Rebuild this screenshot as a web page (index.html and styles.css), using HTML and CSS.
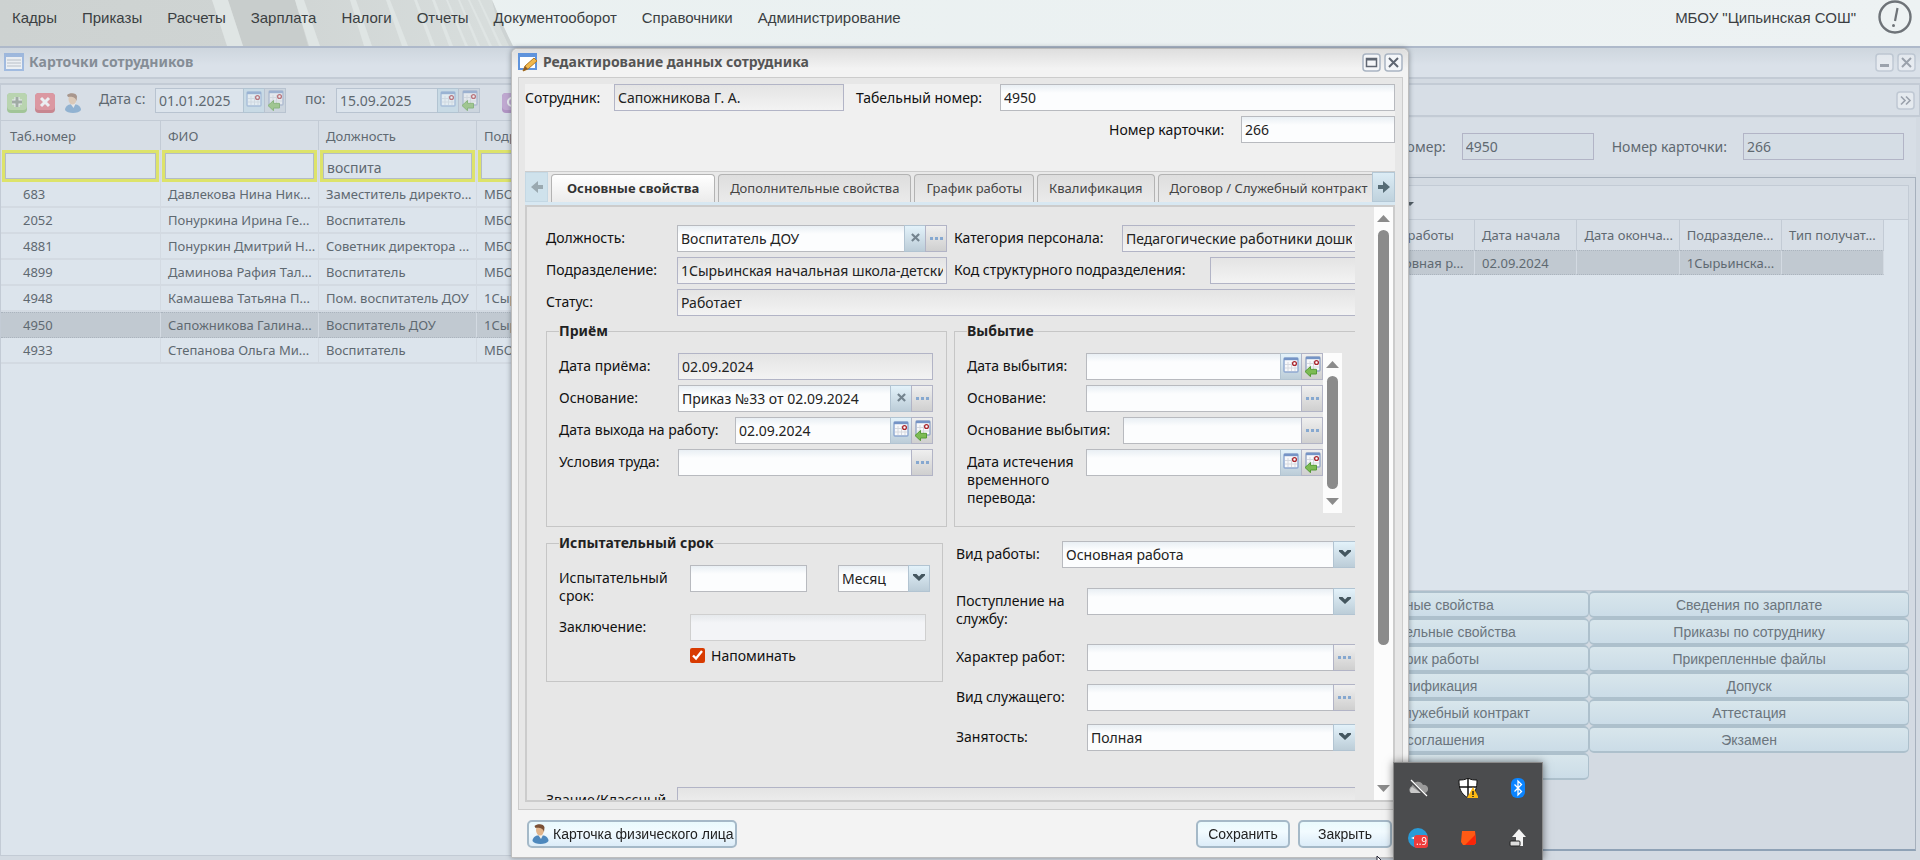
FILE: index.html
```html
<!doctype html>
<html lang="ru">
	<head>
		<meta charset="utf-8">
		<title>Карточки сотрудников</title>
		<link rel="stylesheet" href="styles.css">
	</head>

	<body>
		<!-- icons -->
		<svg class="sprite" aria-hidden="true">
			<symbol id="i-cal" viewBox="0 0 16 18">
				<rect x="1" y="1" width="14" height="14" rx="1" fill="#f8f9fb" stroke="#8ea8d0" stroke-width="1.4"/>
				<path d="M1 2h14" stroke="#7594c6" stroke-width="2.4"/>
				<path d="M2 7.5h12M2 11h12M5 5v9M8.5 5v9M12 5v9" stroke="#d6d9df" stroke-width="1"/>
				<circle cx="11.5" cy="6.5" r="1.9" fill="#fff" stroke="#a8242c" stroke-width="1.3"/>
			</symbol>
			<symbol id="i-calback" viewBox="0 0 17 21">
				<rect x="2" y="1" width="14" height="14" rx="1" fill="#f8f9fb" stroke="#98a8c6" stroke-width="1.4"/>
				<path d="M2 2h14" stroke="#7594c6" stroke-width="2.4"/>
				<path d="M3 7.5h12M3 11h12M6 5v9M9.5 5v9" stroke="#d6d9df" stroke-width="1"/>
				<circle cx="12.5" cy="6.5" r="1.9" fill="#fff" stroke="#a8242c" stroke-width="1.3"/>
				<path d="M1 15.5l5.500-5v2.800h6v4.700h-6v2.700z" fill="#7dbb54" stroke="#559a35" stroke-width="1"/>
			</symbol>
			<symbol id="i-x" viewBox="0 0 10 10">
				<path d="M1 1l8 8M9 1l-8 8" stroke="#74848f" stroke-width="2.4"/>
			</symbol>
			<symbol id="i-dots" viewBox="0 0 13 3">
				<path d="M0 0h3v3h-3zM5 0h3v3h-3zM10 0h3v3h-3z" fill="#86a8d0"/>
			</symbol>
			<symbol id="i-down" viewBox="0 0 12 7">
				<path d="M0 0h3.500l2.500 2.500L8.500 0H12v1.500L6 7 0 1.500z" fill="#44565f"/>
			</symbol>
			<symbol id="i-arrow" viewBox="0 0 12 12">
				<path d="M0 4h5V0l7 6-7 6V8H0z" fill="currentColor"/>
			</symbol>
			<symbol id="i-user" viewBox="0 0 16 20">
				<path d="M0 17c0-4 4-6 8-6s8 2 8 6c-2 4-14 4-16 0z" fill="#4d88bd"/>
				<path d="M5 10l3.500 5L11 10z" fill="#f3efe9"/>
				<ellipse cx="7.500" cy="6" rx="4" ry="5.500" fill="#e0b58c"/>
				<path d="M2 2c3-3 10-2 10 1.500L11.500 8C10.500 4 7 3.500 3 4z" fill="#7a5136"/>
			</symbol>
			<symbol id="i-close" viewBox="0 0 19 19">
				<rect x="1" y="1" width="17" height="17" rx="3" fill="#f4f6f9" stroke="#a9b4c2" stroke-width="1.5"/>
				<path d="M5 5l9 9M14 5l-9 9" stroke="#5f6672" stroke-width="2"/>
			</symbol>
			<symbol id="i-max" viewBox="0 0 19 19">
				<rect x="1" y="1" width="17" height="17" rx="3" fill="#f4f6f9" stroke="#a9b4c2" stroke-width="1.5"/>
				<path d="M4.500 5.500h10v8h-10z" fill="none" stroke="#5f6672" stroke-width="1.5"/>
				<path d="M4 6.500h11" stroke="#5f6672" stroke-width="2"/>
			</symbol>
			<symbol id="i-min" viewBox="0 0 19 19">
				<rect x="1" y="1" width="17" height="17" rx="3" fill="#f4f6f9" stroke="#a9b4c2" stroke-width="1.5"/>
				<path d="M5 12.500h9" stroke="#5f6672" stroke-width="3"/>
			</symbol>
			<symbol id="i-more" viewBox="0 0 19 19">
				<rect x="1" y="1" width="17" height="17" rx="3" fill="#f4f6f9" stroke="#a9b4c2" stroke-width="1.5"/>
				<path d="M5 5.500l4 4-4 4M10 5.500l4 4-4 4" fill="none" stroke="#5f6672" stroke-width="1.6"/>
			</symbol>
		</svg>

		<header class="topbar">
			<svg class="topbar-bg" viewBox="0 0 560 46" aria-hidden="true">
				<defs>
					<linearGradient id="tb" x1="0" x2="1"><stop offset="0" stop-color="#cdd2d1"/><stop offset=".5" stop-color="#cfd4d3"/><stop offset="1" stop-color="#d8dedd"/></linearGradient>
				</defs>
				<path d="M0 0H492L512 46H0z" fill="url(#tb)"/>
				<path d="M228 0H295L308 46H243z" fill="#c8cdcc"/>
				<g fill="#dfe5e4">
					<path d="M212 0h16l15 46h-16z"/>
					<path d="M295 0h9l16 46h-11z"/>
					<path d="M350 0h6l16 46h-8z"/>
					<path d="M386 0h4l18 46h-6z"/>
					<path d="M414 0h3l18 46h-4z"/>
					<path d="M432 0h3l18 46h-4z"/>
					<path d="M446 0h2l20 46h-3z"/>
					<path d="M458 0h2l20 46h-3z"/>
					<path d="M468 0h2l22 46h-3z"/>
					<path d="M478 0h2l22 46h-3z"/>
				</g>
				<path d="M492 0c6 14 13 30 21 46h-4c-8-16-14-30-17-46z" fill="#cdd3d3"/>
			</svg>
			<nav class="menu">
				<a href="#">Кадры</a>
				<a href="#">Приказы</a>
				<a href="#">Расчеты</a>
				<a href="#">Зарплата</a>
				<a href="#">Налоги</a>
				<a href="#">Отчеты</a>
				<a href="#">Документооборот</a>
				<a href="#">Справочники</a>
				<a href="#">Администрирование</a>
			</nav>
			<a href="#" class="org">МБОУ "Ципьинская СОШ"</a>
			<svg class="alert" viewBox="0 0 34 34" role="img" aria-label="Внимание">
				<circle cx="17" cy="17" r="15.500" fill="none" stroke="#6e7378" stroke-width="2.4"/>
				<path d="M19.500 8l-2.500 13" stroke="#6e7378" stroke-width="2.2"/>
				<circle cx="15.500" cy="25.500" r="1.500" fill="#6e7378"/>
			</svg>
		</header>

		<main class="window">
			<div class="win-title">
				<svg class="faded" width="20" height="18" viewBox="0 0 20 18"><path d="M1 1h18v16H1z" fill="#fff" stroke="#6a96d8" stroke-width="2"/><path d="M1 2.500h18" stroke="#6a96d8" stroke-width="3"/><path d="M3 7h14M3 10h14M3 13h14" stroke="#9aa2aa"/></svg>
				<h1>Карточки сотрудников</h1>
				<button class="tool faded" aria-label="Свернуть"><svg><use href="#i-min"/></svg></button>
				<button class="tool faded" aria-label="Закрыть окно"><svg><use href="#i-close"/></svg></button>
			</div>
			<div class="win-body">
				<section class="cards">
					<div class="toolbar">
						<button class="sq faded" aria-label="Добавить"><svg viewBox="0 0 20 20"><rect width="20" height="20" rx="4" fill="#6fae4c"/><rect width="20" height="17" rx="4" fill="#9ccb7c"/><path d="M10 4v10M5 9h10" stroke="#fff" stroke-width="5"/><path d="M10 4v10M5 9h10" stroke="#6a7a66" stroke-width="3"/></svg></button>
						<button class="sq faded" aria-label="Удалить"><svg viewBox="0 0 20 20"><rect width="20" height="20" rx="4" fill="#b8303c"/><rect width="20" height="17" rx="4" fill="#df5560"/><path d="M6 5l8 8M14 5l-8 8" stroke="#fff" stroke-width="3"/></svg></button>
						<button class="sq faded" aria-label="Физическое лицо"><svg><use href="#i-user"/></svg></button>
						<label for="from" class="from">Дата с:</label>
						<div class="ctl date-from">
							<input id="from" value="01.01.2025"><button class="trig blue" aria-label="Календарь"><svg class="cal"><use href="#i-cal"/></svg></button><button class="trig" aria-label="Назад"><svg class="calback"><use href="#i-calback"/></svg></button>
						</div>
						<label for="to" class="to">по:</label>
						<div class="ctl date-to">
							<input id="to" value="15.09.2025"><button class="trig blue" aria-label="Календарь"><svg class="cal"><use href="#i-cal"/></svg></button><button class="trig" aria-label="Назад"><svg class="calback"><use href="#i-calback"/></svg></button>
						</div>
						<button class="sq faded" aria-label="Обновить"><svg viewBox="0 0 20 20"><rect width="20" height="20" rx="4" fill="#8a4aa0"/><rect width="20" height="17" rx="4" fill="#a874bb"/><circle cx="10" cy="9" r="4" fill="none" stroke="#fff" stroke-width="2"/></svg></button>
					</div>
					<table class="grid">
						<thead>
							<tr>
								<th>Таб.номер</th>
								<th>ФИО</th>
								<th>Должность</th>
								<th>Подразделение</th>
							</tr>
							<tr class="filters">
								<td><input aria-label="Таб.номер"></td>
								<td><input aria-label="ФИО"></td>
								<td><input aria-label="Должность" value="воспита"></td>
								<td><input aria-label="Подразделение"></td>
							</tr>
						</thead>
						<tbody>
							<tr><td>683</td><td>Давлекова Нина Ник...</td><td>Заместитель директо...</td><td>МБОУ</td></tr>
							<tr><td>2052</td><td>Понуркина Ирина Ге...</td><td>Воспитатель</td><td>МБОУ</td></tr>
							<tr><td>4881</td><td>Понуркин Дмитрий Н...</td><td>Советник директора ...</td><td>МБОУ</td></tr>
							<tr><td>4899</td><td>Даминова Рафия Тал...</td><td>Воспитатель</td><td>МБОУ</td></tr>
							<tr><td>4948</td><td>Камашева Татьяна П...</td><td>Пом. воспитатель ДОУ</td><td>1Сырьинская</td></tr>
							<tr class="selected"><td>4950</td><td>Сапожникова Галина...</td><td>Воспитатель ДОУ</td><td>1Сырьинская</td></tr>
							<tr><td>4933</td><td>Степанова Ольга Ми...</td><td>Воспитатель</td><td>МБОУ</td></tr>
						</tbody>
					</table>
				</section>

				<section class="details">
					<div class="details-head">
						<button class="tool faded" aria-label="Развернуть"><svg><use href="#i-more"/></svg></button>
					</div>
					<div class="details-fields">
						<label for="d-tab">Табельный номер:</label>
						<div class="ctl w-tab"><input id="d-tab" value="4950" readonly></div>
						<label for="d-card">Номер карточки:</label>
						<div class="ctl w-card"><input id="d-card" value="266" readonly></div>
					</div>
					<div class="works">
						<div class="works-grid">
							<div class="works-bar"><span class="caret"></span></div>
							<table class="grid">
								<thead>
									<tr><th></th><th>Вид работы</th><th>Дата начала</th><th>Дата оконча...</th><th>Подразделе...</th><th>Тип получат...</th></tr>
								</thead>
								<tbody>
									<tr class="selected"><td></td><td>Основная р...</td><td>02.09.2024</td><td></td><td>1Сырьинска...</td><td></td></tr>
								</tbody>
							</table>
						</div>
						<div class="links">
							<button>Основные свойства</button>
							<button>Сведения по зарплате</button>
							<button>Дополнительные свойства</button>
							<button>Приказы по сотруднику</button>
							<button>График работы</button>
							<button>Прикрепленные файлы</button>
							<button>Квалификация</button>
							<button>Допуск</button>
							<button>Договор / Служебный контракт</button>
							<button>Аттестация</button>
							<button>Доп. соглашения</button>
							<button>Экзамен</button>
							<button aria-label="Прочее"></button>
						</div>
					</div>
				</section>
			</div>
		</main>

		<div class="layer">
			<div class="dialog" role="dialog" aria-labelledby="dlg-title">
				<div class="dlg-title">
					<svg width="20" height="19" viewBox="0 0 20 19"><path d="M1 1h17v15H1z" fill="#fff" stroke="#5f93dc" stroke-width="2"/><path d="M1 2.500h17" stroke="#5f93dc" stroke-width="3"/><path d="M5 18l2-5 9-8 3 3-9 8z" fill="#f2b84b" stroke="#b27a24"/><path d="M5 18l2-5 3 3z" fill="#8a5a28"/></svg>
					<h2 id="dlg-title">Редактирование данных сотрудника</h2>
					<button class="tool" aria-label="Развернуть окно"><svg><use href="#i-max"/></svg></button>
					<button class="tool" aria-label="Закрыть диалог"><svg><use href="#i-close"/></svg></button>
				</div>

				<div class="dlg-body">
					<div class="person">
						<div class="person-row">
							<label class="l-89" for="p-name">Сотрудник:</label>
							<div class="ctl w-name"><input id="p-name" value="Сапожникова Г. А." readonly></div>
							<label class="l-144 after" for="p-tab">Табельный номер:</label>
							<div class="ctl"><input id="p-tab" value="4950"></div>
						</div>
						<div class="person-row right">
							<label class="l-132" for="p-card">Номер карточки:</label>
							<div class="ctl w-card"><input id="p-card" value="266"></div>
						</div>
					</div>

					<div class="tabs">
						<button class="scroll-tab off" aria-label="Предыдущие вкладки"><svg class="flip"><use href="#i-arrow"/></svg></button>
						<div class="tab-strip" role="tablist">
							<button class="tab active" role="tab">Основные свойства</button>
							<button class="tab" role="tab">Дополнительные свойства</button>
							<button class="tab" role="tab">График работы</button>
							<button class="tab" role="tab">Квалификация</button>
							<button class="tab" role="tab">Договор / Служебный контракт</button>
						</div>
						<button class="scroll-tab" aria-label="Следующие вкладки"><svg><use href="#i-arrow"/></svg></button>
					</div>

					<div class="tab-panel">
						<form class="form">
							<div class="cols top-rows">
								<div class="row">
									<label class="l-131" for="f-post">Должность:</label>
									<div class="ctl"><input id="f-post" value="Воспитатель ДОУ"><button type="button" class="trig blue" aria-label="Очистить"><svg class="x"><use href="#i-x"/></svg></button><button type="button" class="trig" aria-label="Выбрать"><svg class="dots"><use href="#i-dots"/></svg></button></div>
								</div>
								<div class="row">
									<label class="l-168" for="f-cat">Категория персонала:</label>
									<div class="ctl"><input id="f-cat" class="cut" value="Педагогические работники дошкольного образования" readonly></div>
								</div>
								<div class="row">
									<label class="l-131" for="f-dep">Подразделение:</label>
									<div class="ctl"><input id="f-dep" value="1Сырьинская начальная школа-детский сад" readonly></div>
								</div>
								<div class="row">
									<label class="l-256" for="f-code">Код структурного подразделения:</label>
									<div class="ctl"><input id="f-code" class="cut" readonly></div>
								</div>
								<div class="row wide">
									<label class="l-131" for="f-state">Статус:</label>
									<div class="ctl"><input id="f-state" class="cut" value="Работает" readonly></div>
								</div>
							</div>

							<div class="cols">
								<fieldset class="box">
									<legend>Приём</legend>
									<div class="row">
										<label class="l-119" for="f-in">Дата приёма:</label>
										<div class="ctl"><input id="f-in" value="02.09.2024" readonly></div>
									</div>
									<div class="row">
										<label class="l-119" for="f-base">Основание:</label>
										<div class="ctl"><input id="f-base" value="Приказ №33 от 02.09.2024"><button type="button" class="trig blue" aria-label="Очистить"><svg class="x"><use href="#i-x"/></svg></button><button type="button" class="trig" aria-label="Выбрать"><svg class="dots"><use href="#i-dots"/></svg></button></div>
									</div>
									<div class="row">
										<label class="l-176" for="f-start">Дата выхода на работу:</label>
										<div class="ctl"><input id="f-start" value="02.09.2024"><button type="button" class="trig blue" aria-label="Календарь"><svg class="cal"><use href="#i-cal"/></svg></button><button type="button" class="trig" aria-label="Назад"><svg class="calback"><use href="#i-calback"/></svg></button></div>
									</div>
									<div class="row">
										<label class="l-119" for="f-cond">Условия труда:</label>
										<div class="ctl"><input id="f-cond"><button type="button" class="trig" aria-label="Выбрать"><svg class="dots"><use href="#i-dots"/></svg></button></div>
									</div>
								</fieldset>

								<fieldset class="box cut">
									<legend>Выбытие</legend>
									<div class="scroller">
										<div class="scroller-body">
											<div class="row">
												<label class="l-119" for="f-out">Дата выбытия:</label>
												<div class="ctl"><input id="f-out"><button type="button" class="trig blue" aria-label="Календарь"><svg class="cal"><use href="#i-cal"/></svg></button><button type="button" class="trig" aria-label="Назад"><svg class="calback"><use href="#i-calback"/></svg></button></div>
											</div>
											<div class="row">
												<label class="l-119" for="f-obase">Основание:</label>
												<div class="ctl"><input id="f-obase"><button type="button" class="trig" aria-label="Выбрать"><svg class="dots"><use href="#i-dots"/></svg></button></div>
											</div>
											<div class="row">
												<label class="l-156" for="f-oreason">Основание выбытия:</label>
												<div class="ctl"><input id="f-oreason"><button type="button" class="trig" aria-label="Выбрать"><svg class="dots"><use href="#i-dots"/></svg></button></div>
											</div>
											<div class="row">
												<label class="l-119" for="f-exp">Дата истечения временного перевода:</label>
												<div class="ctl"><input id="f-exp"><button type="button" class="trig blue" aria-label="Календарь"><svg class="cal"><use href="#i-cal"/></svg></button><button type="button" class="trig" aria-label="Назад"><svg class="calback"><use href="#i-calback"/></svg></button></div>
											</div>
										</div>
										<div class="bar"><i class="up"></i><i class="thumb"></i><i class="down"></i></div>
									</div>
								</fieldset>
							</div>

							<div class="cols second">
								<fieldset class="box trial">
									<legend>Испытательный срок</legend>
									<div class="row first">
										<label class="l-131" for="f-trial">Испытательный срок:</label>
										<div class="ctl w-trial"><input id="f-trial"></div>
										<div class="ctl combo w-unit"><select aria-label="Единица срока"><option>Месяц</option></select><span class="trig blue"><svg class="chev"><use href="#i-down"/></svg></span></div>
									</div>
									<div class="row">
										<label class="l-131" for="f-res">Заключение:</label>
										<div class="ctl"><input id="f-res" disabled></div>
									</div>
									<label class="check"><input type="checkbox" checked> Напоминать</label>
								</fieldset>

								<div class="kinds">
									<div class="row">
										<label class="l-106" for="f-kind">Вид работы:</label>
										<div class="ctl combo"><select id="f-kind" class="cut"><option>Основная работа</option></select><span class="trig blue cut"><svg class="chev"><use href="#i-down"/></svg></span></div>
									</div>
									<div class="row tall">
										<label class="l-131" for="f-serv">Поступление на службу:</label>
										<div class="ctl combo"><select id="f-serv" class="cut"><option></option></select><span class="trig blue cut"><svg class="chev"><use href="#i-down"/></svg></span></div>
									</div>
									<div class="row">
										<label class="l-131" for="f-char">Характер работ:</label>
										<div class="ctl"><input id="f-char"><button type="button" class="trig cut" aria-label="Выбрать"><svg class="dots"><use href="#i-dots"/></svg></button></div>
									</div>
									<div class="row">
										<label class="l-131" for="f-off">Вид служащего:</label>
										<div class="ctl"><input id="f-off"><button type="button" class="trig cut" aria-label="Выбрать"><svg class="dots"><use href="#i-dots"/></svg></button></div>
									</div>
									<div class="row">
										<label class="l-131" for="f-busy">Занятость:</label>
										<div class="ctl combo"><select id="f-busy" class="cut"><option>Полная</option></select><span class="trig blue cut"><svg class="chev"><use href="#i-down"/></svg></span></div>
									</div>
								</div>
							</div>

							<div class="row rank">
								<label class="l-131" for="f-rank">Звание/Классный чин:</label>
								<div class="ctl"><input id="f-rank" class="cut" readonly></div>
							</div>
						</form>
						<div class="bar main-bar"><i class="up"></i><i class="thumb"></i><i class="down"></i></div>
					</div>
				</div>

				<div class="dlg-foot">
					<button class="btn with-icon"><svg><use href="#i-user"/></svg>Карточка физического лица</button>
					<button class="btn">Сохранить</button>
					<button class="btn">Закрыть</button>
				</div>
			</div>
		</div>

		<div class="tray">
			<svg viewBox="0 0 20 20"><path d="M3 15a4 4 0 0 1 1-7 6 6 0 0 1 11-1 4 4 0 0 1 2 8z" fill="#9b9b9b"/><path d="M3 15a4 4 0 0 1 1-6l9 6z" fill="#c9c9c9"/><path d="M2 2l16 16" stroke="#4b4c4e" stroke-width="3"/><path d="M3 2l16 16" stroke="#fff" stroke-width="1.3"/></svg>
			<svg viewBox="0 0 20 20"><path d="M10 0c3 2 6 2 9 2 0 8-1 13-9 18C2 15 1 10 1 2c3 0 6 0 9-2z" fill="#fff" stroke="#111"/><path d="M10 0v19M1 9h17" stroke="#111" stroke-width="1.5"/><path d="M15 9l6 11H9z" fill="#fdb913"/><path d="M15 13v4M15 18v1" stroke="#222" stroke-width="1.5"/></svg>
			<svg viewBox="0 0 20 20"><rect x="3" width="14" height="20" rx="6" fill="#0a84ff"/><path d="M6.500 6.500l7 7L10 17V3l3.500 3.500-7 7" fill="none" stroke="#fff" stroke-width="1.3"/></svg>
			<svg viewBox="0 0 20 20"><circle cx="10" cy="10" r="10" fill="#2a9bd8"/><path d="M3 10l5-2v4z" fill="#fff"/><rect x="6" y="7" width="14" height="13" rx="3" fill="#f03c3c"/><text x="8" y="17" class="badge">..9</text></svg>
			<svg viewBox="0 0 20 20"><path d="M4 3h13l1 12-2 2H5l-2-3z" fill="#ff5a14"/><path d="M17 3l1 12-2 2H7L17 7z" fill="#fa2408"/></svg>
			<svg viewBox="0 0 20 20"><path d="M11 1l7 8h-3v9H8V9H4z" fill="#f4f4f4"/><rect x="2" y="13" width="10" height="5" rx="1" fill="#ddd" stroke="#222"/></svg>
		</div>
		<svg class="pointer" width="12" height="18" viewBox="0 0 12 18"><path d="M1 1v14l3-3 3 5 2-1-3-5h5z" fill="#fff" stroke="#223"/></svg>
	</body>
</html>
```
FILE: styles.css
```css
* {
	box-sizing: border-box;
}

html, body {
	height: 100%;
	margin: 0;
}

body {
	display: flex;
	flex-direction: column;
	overflow: hidden;
	background: #d3dae2;
	font-family: "Noto Sans", Tahoma, sans-serif;
	font-size: 14px;
	color: #111;
}

button, input, select {
	font: inherit;
	color: inherit;
	margin: 0;
}

button {
	padding: 0;
	border: 0;
	background: none;
	cursor: pointer;
}

h1, h2 {
	margin: 0;
	font-size: 14px;
	line-height: 18px;
}

.sprite {
	position: absolute;
	width: 0;
	height: 0;
}

.faded {
	opacity: 0.5;
}

/* top menu */
.topbar {
	position: relative;
	display: flex;
	align-items: center;
	flex: none;
	height: 48px;
	padding: 0 8px 12px 12px;
	background: linear-gradient(90deg, #e9f0f0, #edf2f3);
	border-bottom: 2px solid #aeb9ca;
	font-family: "Liberation Sans", Arial, sans-serif;
	font-size: 15px;
}

.topbar-bg {
	position: absolute;
	left: 0;
	top: 0;
	width: 560px;
	height: 46px;
}

.menu {
	position: relative;
	display: flex;
	gap: 25px;
	flex: 1;
}

.topbar a {
	color: #3b3f42;
	text-decoration: none;
	white-space: nowrap;
}

.alert {
	width: 34px;
	height: 34px;
	margin-left: 22px;
}

/* main window */
.window {
	display: flex;
	flex-direction: column;
	flex: 1;
	min-height: 0;
	color: #5f6971;
}

.win-title {
	display: flex;
	align-items: center;
	gap: 3px;
	flex: none;
	height: 31px;
	padding: 0 4px 1px;
	background: linear-gradient(#ced6de, #dae1e9 60%);
	border-bottom: 2px solid #c3cbd5;
}

.win-title h1 {
	flex: 1;
	margin-left: 2px;
	color: #858d96;
}

.tool {
	width: 19px;
	height: 19px;
}

.tool svg {
	display: block;
	width: 19px;
	height: 19px;
}

.win-body {
	display: flex;
	flex: 1;
	min-height: 0;
	padding: 4px 0 4px;
	gap: 6px;
}

.cards {
	flex: 1;
	min-width: 0;
	background: #dce4ec;
	border: 2px solid #c3cbd5;
	border-width: 2px 1px 1px;
}

.toolbar {
	display: flex;
	align-items: center;
	height: 36px;
	padding-left: 6px;
	gap: 8px;
	background: #d7dee6;
	border-bottom: 1px solid #c3cbd5;
}

.toolbar label {
	margin-top: -8px;
	white-space: nowrap;
}

.toolbar .from {
	width: 48px;
	margin-left: 8px;
}

.toolbar .to {
	width: 23px;
	margin-left: 11px;
}

.toolbar .ctl {
	flex: none;
	height: 25px;
	margin-top: -4px;
}

.toolbar .date-from {
	width: 131px;
}

.toolbar .date-to {
	width: 144px;
	margin-right: 14px;
}

.sq {
	width: 20px;
	height: 20px;
}

.sq svg {
	display: block;
	width: 20px;
	height: 20px;
}

.window .ctl input {
	background: #dce4ec;
	border-color: #b8c3d0;
	color: #5f6971;
}

.window .ctl input:read-only {
	background: #d5dde5;
}

.window .trig {
	border-color: #b8c3d0;
	background: #ccd5de;
}

.window .trig.blue {
	background: #c8dae5;
}

.window .trig svg {
	opacity: 0.55;
}

.grid {
	width: 100%;
	table-layout: fixed;
	border-collapse: separate;
	border-spacing: 0;
	font-size: 13px;
}

.grid th {
	height: 30px;
	padding: 0 7px;
	text-align: left;
	font-weight: normal;
	background: #d7dee6;
	border-right: 1px solid #c3cbd5;
	white-space: nowrap;
	overflow: hidden;
}

.grid td {
	height: 26px;
	padding: 0 7px;
	border-right: 1px solid #d3dae2;
	border-bottom: 2px solid #d3dae2;
	line-height: 18px;
	white-space: nowrap;
	overflow: hidden;
}

.grid .selected td {
	background: #c1c9d1;
	border-top: 1px dotted #abb4be;
	border-bottom: 1px dotted #abb4be;
}

.cards .grid th {
	height: 29px;
}

.cards .grid th:nth-child(1) {
	width: 160px;
	padding-left: 9px;
}

.cards .grid th:nth-child(2), .cards .grid th:nth-child(3) {
	width: 158px;
}

.cards .grid tbody td:first-child {
	padding-left: 22px;
}

.grid .filters td {
	height: 32px;
	padding: 0 1px;
	background: #d7dee6;
	border-bottom: 0;
}

.filters input {
	display: block;
	width: 100%;
	height: 32px;
	padding: 2px 4px 0;
	background: #dce4ec;
	border: 3px solid #dde36a;
	outline: 1px solid #b3bcc6;
	outline-offset: -4px;
	font-size: 14px;
}

.details {
	display: flex;
	flex-direction: column;
	flex: none;
	width: 34.3%;
	padding-bottom: 5px;
}

.details-head {
	display: flex;
	justify-content: flex-end;
	align-items: center;
	height: 34px;
	padding-right: 4px;
	background: #d7dee6;
	border: 2px solid #c3cbd5;
	border-right-width: 1px;
}

.details-fields {
	display: flex;
	justify-content: flex-end;
	align-items: center;
	height: 56px;
	margin: 1px 4px 3px 0;
	padding: 0 12px 0 0;
	gap: 16px;
	background: #d7dee6;
}

.details-fields .ctl {
	flex: none;
}

.w-tab {
	width: 132px;
	margin-right: 2px;
}

.details .w-card {
	width: 161px;
}

.works {
	display: flex;
	flex-direction: column;
	flex: 1;
	margin-right: 4px;
	padding: 7px 6px 0 7px;
	border: 1px solid #a6b0bc;
	border-bottom: 2px solid #8fa2b6;
}

.works-grid {
	flex: 1;
	background: #dce4ec;
	border: 1px solid #c3cbd5;
}

.works-bar {
	height: 34px;
	padding: 16px 0 0 136px;
	background: #d7dee6;
	border-bottom: 1px solid #c3cbd5;
}

.caret {
	display: block;
	width: 7px;
	border: 4px solid transparent;
	border-top-color: #4e5961;
}

.works .grid {
	width: 614px;
}

.works .grid td {
	height: 25px;
}

.links {
	display: grid;
	grid-template-columns: 1fr 1fr;
	grid-auto-rows: 27px;
	margin-bottom: 69px;
}

.links button {
	background: linear-gradient(#d8e6ec, #cbdce7);
	border: 2px solid #adc0cc;
	border-left-width: 1px;
	border-right-width: 1px;
	border-radius: 5px;
	font-family: "Liberation Sans", Arial, sans-serif;
	font-size: 14px;
	color: #6b757d;
}

/* dialog */
.layer {
	position: fixed;
	inset: 48px 0 2px;
	display: flex;
	justify-content: center;
}

.dialog {
	display: flex;
	flex-direction: column;
	width: 46%;
	min-width: 898px;
	padding: 0 5px 0 6px;
	background: #f3f3f3;
	border: 1px solid #bdbdbd;
	border-radius: 6px 6px 0 0;
	box-shadow: 0 0 5px rgba(80, 90, 100, 0.6);
}

.dlg-title {
	display: flex;
	align-items: center;
	gap: 3px;
	flex: none;
	height: 28px;
	margin: 0 -5px 0 -6px;
	padding: 0 5px 2px 6px;
	background: linear-gradient(#dedede, #f3f3f3 70%);
	border-radius: 6px 6px 0 0;
}

.dlg-title h2 {
	flex: 1;
	margin-left: 2px;
	color: #555;
}

.dlg-body {
	display: flex;
	flex-direction: column;
	flex: 1;
	min-height: 0;
	padding: 6px 7px 7px 6px;
	background: #e7e7e7;
	border: 1px solid #ccc;
}

.person {
	flex: none;
	height: 88px;
	background: #f0f0f0;
	border-bottom: 1px solid #ccc;
}

.person-row {
	display: flex;
	align-items: center;
	margin-bottom: 5px;
}

.person-row.right {
	justify-content: flex-end;
}

.person .w-name {
	flex: none;
	width: 230px;
}

.person .w-card {
	flex: none;
	width: 154px;
}

.after {
	margin-left: 12px;
}

/* fields */
.row {
	display: flex;
	align-items: flex-start;
}

.row > label {
	padding: 4px 8px 0 0;
	line-height: 18px;
}

.l-89, .l-106, .l-119, .l-131, .l-132, .l-144, .l-156, .l-168, .l-176, .l-256 {
	flex: none;
}

.l-89 { width: 89px; }
.l-106 { width: 106px; }
.l-119 { width: 119px; }
.l-131 { width: 131px; }
.l-132 { width: 132px; }
.l-144 { width: 144px; }
.l-156 { width: 156px; }
.l-168 { width: 168px; }
.l-176 { width: 176px; }
.l-256 { width: 256px; }

.l-156, .l-168, .l-176, .l-256 {
	white-space: nowrap;
}

.ctl {
	display: flex;
	flex: 1;
	min-width: 0;
	height: 27px;
}

.ctl input, .ctl select {
	flex: 1;
	width: 100%;
	min-width: 0;
	height: 100%;
	padding: 0 3px;
	background: linear-gradient(#e9eff4, #fcfdfe 8px);
	border: 1px solid #b8babf;
	border-radius: 0;
	outline: 0;
	color: #222;
}

.ctl input:read-only {
	background: linear-gradient(#e4e4e4, #f3f3f3);
	border-color: #b2b4c6;
}

.ctl input:disabled {
	background: linear-gradient(#e6e9ec, #f3f4f7 8px);
	border-color: #cfcfcf;
}

.ctl select {
	appearance: none;
}

.ctl .cut, .box.cut {
	border-right: 0;
}

.trig {
	display: flex;
	align-items: center;
	justify-content: center;
	flex: none;
	width: 22px;
	height: 100%;
	margin-left: -1px;
	background: linear-gradient(#efefef, #cfcfcf);
	border: 1px solid #b2b4c6;
}

.trig.blue {
	background: linear-gradient(#e3f2fa, #bccdd8);
	border-color: #b2c4d2;
}

.combo {
	position: relative;
}

.combo .trig {
	position: absolute;
	right: 0;
	top: 0;
	pointer-events: none;
}

.cal {
	width: 16px;
	height: 18px;
	margin-top: -2px;
}

.calback {
	width: 17px;
	height: 21px;
}

.x {
	width: 9px;
	height: 9px;
	margin-top: -3px;
}

.dots {
	width: 13px;
	height: 3px;
}

.chev {
	width: 12px;
	height: 7px;
	margin-top: -3px;
}

/* tabs */
.tabs {
	display: flex;
	flex: none;
	height: 33px;
	background: #e9e9e9;
	border-bottom: 3px solid #d8e8f2;
}

.scroll-tab {
	display: flex;
	align-items: center;
	justify-content: center;
	width: 23px;
	background: linear-gradient(#dcecf5, #bfd2dd);
	border: 1px solid #b4c8d6;
	color: #566c76;
}

.scroll-tab svg {
	width: 12px;
	height: 12px;
}

.scroll-tab.off {
	background: #cfe2ec;
	border-color: #c4d8e4;
	color: #9aa9b0;
}

.flip {
	transform: scaleX(-1);
}

.tab-strip {
	display: flex;
	flex: 1;
	gap: 3px;
	min-width: 0;
	padding: 2px 0 0 3px;
	overflow: hidden;
	font-size: 13px;
}

.tab {
	flex: none;
	padding: 0 11px 2px;
	background: linear-gradient(#dedede, #eaeaea);
	border: 1px solid #b3b3b3;
	border-bottom: 0;
	border-radius: 4px 4px 0 0;
	color: #444;
	white-space: nowrap;
}

.tab.active {
	padding: 0 15px 2px;
	background: linear-gradient(#fff, #ebebeb);
	font-weight: bold;
	color: #333;
}

.tab-panel {
	display: flex;
	flex: 1;
	min-height: 0;
	border: 2px solid #ccc;
}

.form {
	flex: 1;
	min-width: 0;
	padding: 18px 19px 0 19px;
	overflow: hidden;
}

.cols {
	display: grid;
	grid-template-columns: 1fr 1fr;
	column-gap: 7px;
}

.top-rows {
	row-gap: 5px;
	margin-bottom: 6px;
}

.wide {
	grid-column: 1 / 3;
}

.box {
	min-width: 0;
	min-height: 205px;
	margin: 0;
	padding: 13px 13px 0 12px;
	border: 1px solid #c6c6c6;
}

.box .row {
	margin-bottom: 5px;
}

.box legend {
	padding: 0;
	font-weight: bold;
	line-height: 18px;
	color: #222;
}

.scroller {
	display: flex;
	height: 160px;
}

.scroller-body {
	flex: 1;
	min-width: 0;
	overflow: hidden;
}

.bar {
	display: flex;
	flex-direction: column;
	align-items: center;
	flex: none;
	width: 19px;
	padding: 8px 0;
	background: #fcfcfc;
}

.up, .down {
	width: 13px;
	height: 7px;
	background: #8b8b8b;
	clip-path: polygon(50% 0, 100% 100%, 0 100%);
}

.down {
	clip-path: polygon(0 0, 100% 0, 50% 100%);
}

.thumb {
	width: 11px;
	height: 113px;
	margin: 8px 0 auto;
	background: #8b8b8b;
	border-radius: 6px;
}

.main-bar .thumb {
	height: 72%;
}

.second {
	margin-top: 7px;
}

.trial {
	min-height: 148px;
	margin-right: 4px;
	align-self: start;
}

.trial .first {
	margin-bottom: 9px;
}

.trial .ctl {
	margin-right: 3px;
}

.trial .w-trial {
	flex: none;
	width: 117px;
	margin-right: 31px;
}

.trial .w-unit {
	flex: none;
	width: 92px;
	margin-right: 0;
}

.check {
	display: flex;
	align-items: center;
	gap: 6px;
	margin-left: 131px;
}

.check input {
	width: 15px;
	height: 15px;
	accent-color: #d83b01;
}

.kinds {
	display: flex;
	flex-direction: column;
	gap: 13px;
	padding: 7px 0 0 2px;
}

.kinds .row:first-child {
	margin-bottom: 7px;
}

.tall {
	height: 43px;
}

.rank {
	margin-top: 36px;
}

.dlg-foot {
	display: flex;
	align-items: center;
	gap: 8px;
	flex: none;
	height: 47px;
	padding: 0 11px 0 9px;
}

.btn {
	width: 94px;
	height: 28px;
	background: linear-gradient(#e9fafd, #f2fbff 40%, #dcecf8);
	border: 2px solid #a5b9c8;
	border-radius: 5px;
	font-family: "Liberation Sans", Arial, sans-serif;
	font-size: 14px;
	color: #222;
}

.with-icon {
	display: flex;
	align-items: center;
	gap: 4px;
	width: auto;
	margin-right: auto;
	padding: 0 1px 0 3px;
}

.with-icon svg {
	width: 17px;
	height: 20px;
}

/* system tray popup */
.tray {
	position: fixed;
	right: 377px;
	bottom: 0;
	display: grid;
	grid-template-columns: repeat(3, 20px);
	gap: 30px;
	padding: 15px 14px 12px;
	background: #4b4c4e;
	border: 1px solid #8a8a8a;
	border-bottom: 0;
	box-shadow: 0 0 8px rgba(0, 0, 0, 0.5);
}

.tray svg {
	width: 20px;
	height: 20px;
}

.badge {
	font-size: 10px;
	fill: #fff;
}

.pointer {
	position: fixed;
	left: 1376px;
	bottom: -13px;
}
```
